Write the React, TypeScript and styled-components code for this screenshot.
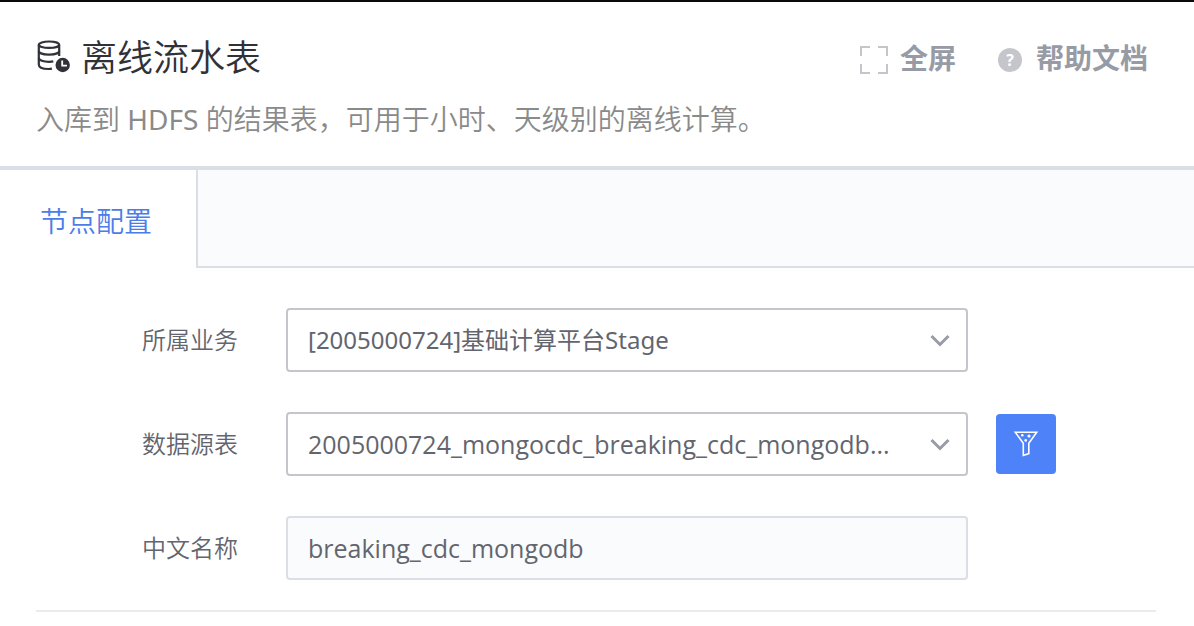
import React from "react";
import styled, { createGlobalStyle, css } from "styled-components";

const GlobalStyle = createGlobalStyle`
  *, *::before, *::after { box-sizing: border-box; }
  body {
    margin: 0;
    background: #ffffff;
    color: #63656e;
    font-family: "Open Sans", "Noto Sans CJK SC", sans-serif;
    font-weight: 350;
  }
`;

const Panel = styled.main`
  border-top: 2px solid #0a0a0a;
`;

const Header = styled.header`
  padding: 32px 46px 27px 36px;
  border-bottom: 4px solid #dcdee5;
`;

const TitleRow = styled.div`
  display: flex;
  align-items: center;
  justify-content: space-between;
`;

const Title = styled.h1`
  display: flex;
  align-items: center;
  gap: 9px;
  margin: 0;
  color: #313238;
  font-size: 36px;
  line-height: 48px;
  font-weight: 350;
`;

const Actions = styled.nav`
  display: flex;
  gap: 42px;
`;

const actionStyle = css`
  display: flex;
  align-items: center;
  gap: 12px;
  padding: 0;
  border: 0;
  background: none;
  color: #979ba5;
  font-family: inherit;
  font-size: 28px;
  line-height: 48px;
  font-weight: 700;
  text-decoration: none;
  cursor: pointer;
`;

const ActionButton = styled.button`
  ${actionStyle}
`;

const ActionLink = styled.a`
  ${actionStyle}
`;

const Description = styled.p`
  margin: 17px 0 0;
  color: #8a8a8a;
  font-size: 28px;
  line-height: 40px;
`;

const Latin = styled.span`
  font-family: "Noto Sans", sans-serif;
  font-weight: 400;
`;

const TabBar = styled.div`
  display: flex;
  background: #fafbfd;
`;

const Tab = styled.button`
  height: 98px;
  padding: 4px 44px 0 40px;
  border: 0;
  background: #ffffff;
  color: #4b7de9;
  font-family: inherit;
  font-size: 28px;
  line-height: 40px;
  font-weight: 350;
  cursor: pointer;
`;

const TabFiller = styled.div`
  flex: 1;
  border-left: 2px solid #dcdee5;
  border-bottom: 2px solid #dcdee5;
`;

const Form = styled.form`
  display: grid;
  gap: 40px;
  margin: 0 38px 0 36px;
  padding: 40px 100px 30px 0;
  border-bottom: 2px solid #ebebed;
`;

const Row = styled.div`
  display: grid;
  grid-template-columns: 202px minmax(0, 1fr) 60px;
  align-items: center;
`;

const Label = styled.label`
  text-align: right;
  font-size: 24px;
  line-height: 32px;
`;

const Control = styled.div`
  position: relative;
  margin: 0 28px 0 48px;
`;

const fieldStyle = css`
  display: block;
  width: 100%;
  height: 64px;
  padding: 0 20px;
  border: 2px solid #c4c6cc;
  border-radius: 4px;
  background: #ffffff;
  color: #63656e;
  font-family: inherit;
  font-size: 25px;
  font-weight: 400;
  line-height: 32px;
`;

const Select = styled.select<{ $mixedScript?: boolean }>`
  ${fieldStyle}
  padding-right: 56px;
  appearance: none;
  cursor: pointer;
  ${({ $mixedScript }) =>
    $mixedScript &&
    css`
      font-family: "Noto Sans", "Noto Sans CJK SC", sans-serif;
      font-size: 24px;
    `}
`;

const TextInput = styled.input`
  ${fieldStyle}
  border-color: #dcdee5;
  background: #fafbfd;
`;

const Chevron = styled.svg`
  position: absolute;
  top: 26px;
  right: 18px;
  pointer-events: none;
`;

const FilterButton = styled.button`
  display: flex;
  align-items: center;
  justify-content: center;
  width: 60px;
  height: 60px;
  padding: 0;
  border: 0;
  border-radius: 4px;
  background: #4e82f8;
  cursor: pointer;
`;

function StorageIcon() {
  return (
    <svg width="36" height="36" viewBox="0 0 36 36" fill="none" aria-hidden="true">
      <g stroke="#313238" strokeWidth="2.2">
        <ellipse cx="13" cy="4.700" rx="10.200" ry="3.200" />
        <path d="M2.800 5V24.500C2.800 27.300 7 29 12.500 29c1.300 0 2.400-.1 3.400-.3M23.200 5V16" />
        <path d="M2.800 11c0 2.200 4.600 3.600 10.200 3.600s10.200-1.400 10.200-3.600" />
        <path d="M2.800 18c0 2.200 4.600 3.800 10.200 3.800 1.600 0 3-.1 4.300-.4" />
      </g>
      <circle cx="26.700" cy="25" r="7.200" fill="#313238" />
      <path d="M26.200 20.500V25.700H31" stroke="#fff" strokeWidth="1.800" />
    </svg>
  );
}

function FullscreenIcon() {
  return (
    <svg width="28" height="32" viewBox="0 0 28 32" fill="none" stroke="#c4c6cc" strokeWidth="2" aria-hidden="true">
      <path d="M10 5H1V14M18 5H27V14M10 31H1V22M18 31H27V22" />
    </svg>
  );
}

const HelpMark = styled.span`
  display: flex;
  align-items: center;
  justify-content: center;
  width: 24px;
  height: 24px;
  margin: 4px 2px 0 0;
  border-radius: 50%;
  background: #c4c6cc;
  color: #ffffff;
  font-size: 16px;
  line-height: 24px;
`;

interface SelectFieldProps {
  id: string;
  label: string;
  value: string;
  mixedScript?: boolean;
  children?: React.ReactNode;
}

function SelectField({ id, label, value, mixedScript, children }: SelectFieldProps) {
  return (
    <Row>
      <Label htmlFor={id}>{label}</Label>
      <Control>
        <Select id={id} defaultValue={value} $mixedScript={mixedScript}>
          <option value={value}>{value}</option>
        </Select>
        <Chevron width="20" height="14" viewBox="0 0 20 14" fill="none" stroke="#979ba5" strokeWidth="3">
          <path d="M1.500 2L10 10.500L18.500 2" />
        </Chevron>
      </Control>
      {children}
    </Row>
  );
}

export default function App() {
  return (
    <>
      <GlobalStyle />
      <Panel lang="zh-CN">
        <Header>
          <TitleRow>
            <Title>
              <StorageIcon />
              离线流水表
            </Title>
            <Actions>
              <ActionButton type="button">
                <FullscreenIcon />
                全屏
              </ActionButton>
              <ActionLink href="#help">
                <HelpMark aria-hidden="true">?</HelpMark>
                帮助文档
              </ActionLink>
            </Actions>
          </TitleRow>
          <Description>
            入库到<Latin> HDFS </Latin>的结果表，可用于小时、天级别的离线计算。
          </Description>
        </Header>
        <TabBar role="tablist">
          <Tab type="button" role="tab" aria-selected="true">节点配置</Tab>
          <TabFiller />
        </TabBar>
        <Form>
          <SelectField id="business" label="所属业务" value="[2005000724]基础计算平台Stage" mixedScript />
          <SelectField id="source" label="数据源表" value="2005000724_mongocdc_breaking_cdc_mongodb...">
            <FilterButton type="button" aria-label="筛选">
              <svg width="26" height="28" viewBox="0 0 26 28" fill="none" stroke="#fff" strokeWidth="1.600" aria-hidden="true">
                <path d="M2.300 2.300H23.700L15.800 13.200V23.600L10.300 25.400V13.200Z" />
                <g fill="#fff" stroke="none">
                  <circle cx="9.300" cy="5.300" r="1.300" />
                  <circle cx="16" cy="6" r="1.600" />
                  <circle cx="12.700" cy="10.400" r="1.300" />
                </g>
              </svg>
            </FilterButton>
          </SelectField>
          <Row>
            <Label htmlFor="alias">中文名称</Label>
            <Control>
              <TextInput id="alias" type="text" readOnly defaultValue="breaking_cdc_mongodb" />
            </Control>
          </Row>
        </Form>
      </Panel>
    </>
  );
}
